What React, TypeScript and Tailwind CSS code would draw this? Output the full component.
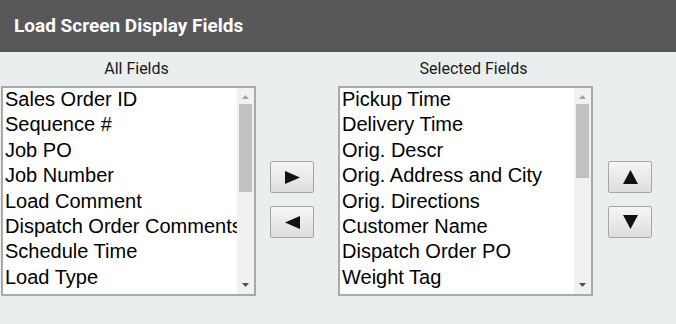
import React from "react";

const allFields = [
  "Sales Order ID",
  "Sequence #",
  "Job PO",
  "Job Number",
  "Load Comment",
  "Dispatch Order Comments",
  "Schedule Time",
  "Load Type",
];

const selectedFields = [
  "Pickup Time",
  "Delivery Time",
  "Orig. Descr",
  "Orig. Address and City",
  "Orig. Directions",
  "Customer Name",
  "Dispatch Order PO",
  "Weight Tag",
];

function ListBox({ items, thumbTop, thumbHeight }: { items: string[]; thumbTop: number; thumbHeight: number }) {
  return (
    <div className="flex h-[210px] w-[255px] border-2 border-[#a9a9a9] bg-white">
      <div className="flex-1 overflow-hidden pl-[2px]">
        {items.map((t) => (
          <div
            key={t}
            className="h-[25.4px] whitespace-nowrap text-[20px] leading-[22px] text-black"
            style={{ fontFamily: '"Liberation Sans", Arial, sans-serif' }}
          >
            {t}
          </div>
        ))}
      </div>
      <div className="relative w-[17px] bg-[#f1f1f1]">
        <svg className="absolute left-[5px] top-[7px]" width="7" height="4" viewBox="0 0 7 4">
          <polygon points="3.5,0 7,4 0,4" fill="#a3a3a3" />
        </svg>
        <div
          className="absolute left-[2px] w-[13px] bg-[#c1c1c1]"
          style={{ top: thumbTop, height: thumbHeight }}
        />
        <svg className="absolute bottom-[7px] left-[5px]" width="7" height="4" viewBox="0 0 7 4">
          <polygon points="0,0 7,0 3.5,4" fill="#505050" />
        </svg>
      </div>
    </div>
  );
}

function ArrowButton({ dir }: { dir: "right" | "left" | "up" | "down" }) {
  let pts = "";
  let w = 15;
  let h = 13;
  if (dir === "right") pts = "0,0 15,6.5 0,13";
  if (dir === "left") pts = "15,0 0,6.5 15,13";
  if (dir === "up") {
    w = 15;
    h = 14;
    pts = "7.5,0 15,14 0,14";
  }
  if (dir === "down") {
    w = 15;
    h = 14;
    pts = "0,0 15,0 7.5,14";
  }
  return (
    <div className="flex h-[32px] w-[44px] items-center justify-center rounded-[2px] border border-[#a6a6a6] bg-gradient-to-b from-[#f6f6f6] to-[#dddddd]">
      <svg width={w} height={h} viewBox={`0 0 ${w} ${h}`}>
        <polygon points={pts} fill="#111111" />
      </svg>
    </div>
  );
}

export default function App() {
  const label = "w-[271px] h-[19px] text-center text-[16px] leading-[19px] text-[#1a1a1a]";
  const font = { fontFamily: 'Roboto, "Liberation Sans", sans-serif' };
  return (
    <div className="h-[324px] w-[676px] overflow-hidden bg-[#e9eeee]" style={font}>
      <div className="flex h-[52px] items-center bg-[#58585a] px-[14px]">
        <span className="text-[19px] font-bold text-white">Load Screen Display Fields</span>
      </div>
      <div className="flex pl-[1px] pt-[7px]">
        <div className="flex w-[255px] flex-col gap-[8px]">
          <div className={label}>All Fields</div>
          <ListBox items={allFields} thumbTop={16} thumbHeight={88} />
        </div>
        <div className="ml-[14px] mt-[102px] flex flex-col gap-[13px]">
          <ArrowButton dir="right" />
          <ArrowButton dir="left" />
        </div>
        <div className="ml-[24px] flex w-[255px] flex-col gap-[8px]">
          <div className={label}>Selected Fields</div>
          <ListBox items={selectedFields} thumbTop={16} thumbHeight={74} />
        </div>
        <div className="ml-[15px] mt-[102px] flex flex-col gap-[13px]">
          <ArrowButton dir="up" />
          <ArrowButton dir="down" />
        </div>
      </div>
    </div>
  );
}
